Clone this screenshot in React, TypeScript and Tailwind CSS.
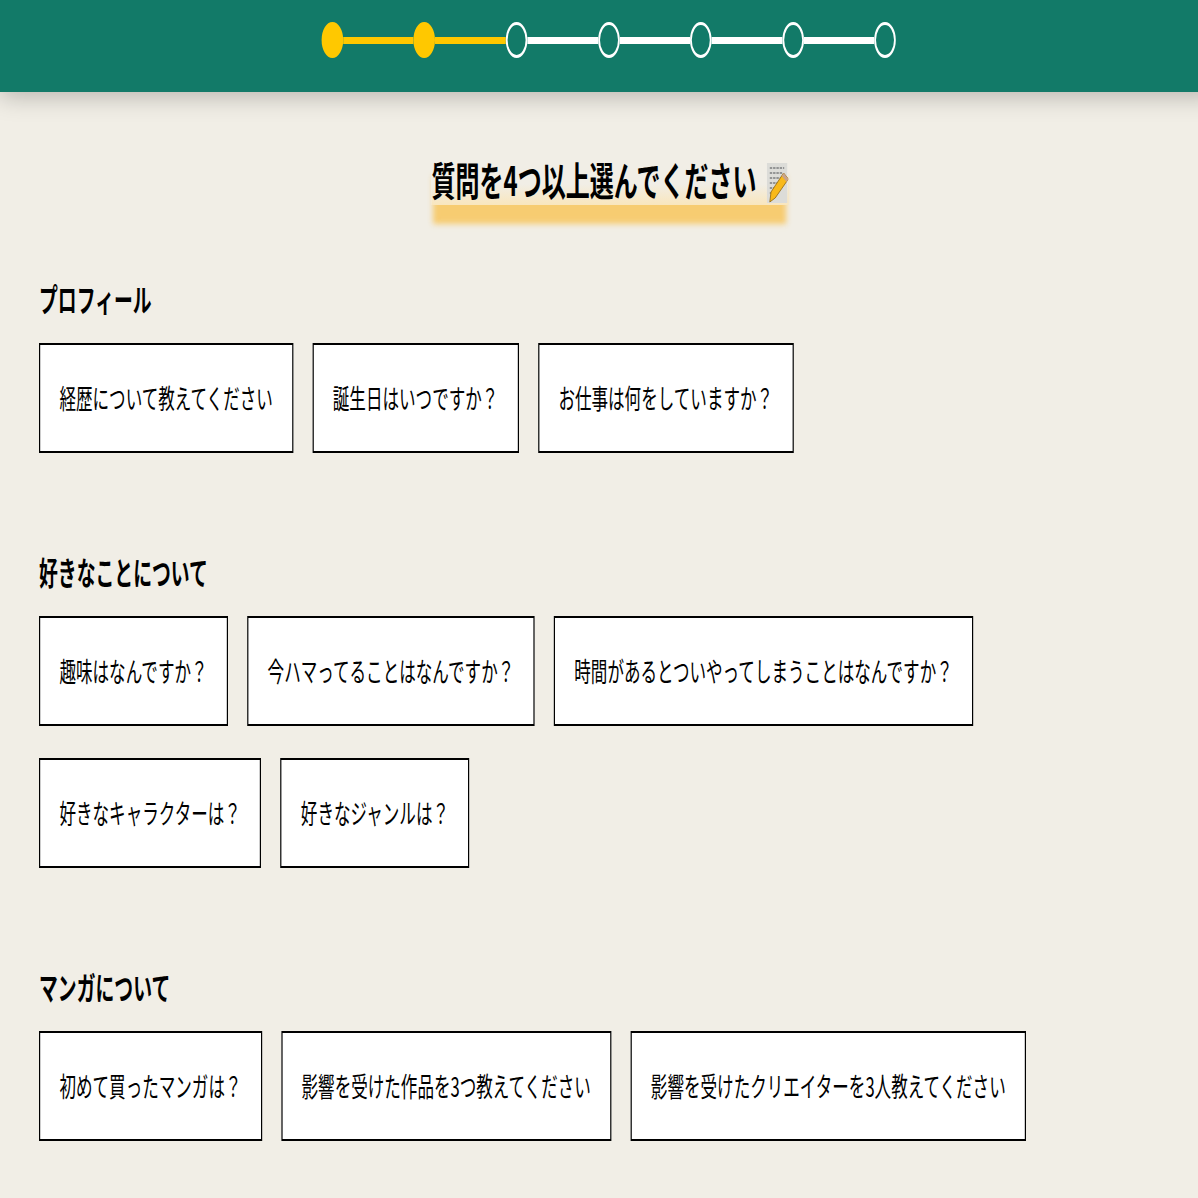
const sections = [
  {
    title: 'プロフィール',
    questions: ['経歴について教えてください', '誕生日はいつですか？', 'お仕事は何をしていますか？'],
  },
  {
    title: '好きなことについて',
    questions: [
      '趣味はなんですか？',
      '今ハマってることはなんですか？',
      '時間があるとついやってしまうことはなんですか？',
      '好きなキャラクターは？',
      '好きなジャンルは？',
    ],
  },
  {
    title: 'マンガについて',
    questions: ['初めて買ったマンガは？', '影響を受けた作品を3つ教えてください', '影響を受けたクリエイターを3人教えてください'],
  },
];

const steps = [true, true, false, false, false, false, false];

const MemoIcon = () => (
  <svg viewBox="0 0 36 40" className="ml-[17px] mt-[10px] h-[40px] w-[36px] shrink-0 self-start">
    <rect x="0" y="0" width="34" height="40" fill="#dcdcd8" />
    <g stroke="#4a4d50" strokeWidth="1.2" strokeDasharray="4 1.5">
      <path d="M5 5h24M5 10h22M5 15h18M5 20h15M5 25h12M5 30h8" />
    </g>
    <path d="M28 10l8 6-22 19-9 4 2-10z" fill="#f8b91a" stroke="#8f6510" strokeWidth="1" />
    <path d="M28 10l8 6-3 3-8-6z" fill="#c9a38a" />
  </svg>
);

const Stepper = () => (
  <div className="flex h-[80px] items-center justify-center pr-[1px]">
    {steps.map((done, i) => (
      <div key={i} className="flex items-center">
        {i > 0 && (
          <div className={`h-[7px] w-[117.6px] ${done || steps[i - 1] ? 'bg-[#ffc800]' : 'bg-white'}`} />
        )}
        <div
          className={`h-[36px] w-[36px] rounded-full border-[3px] ${
            done ? 'border-[#ffc800] bg-[#ffc800]' : 'border-white bg-transparent'
          }`}
        />
      </div>
    ))}
  </div>
);

const App = () => {
  return (
    <div className="h-[1198px] w-[1198px] overflow-hidden bg-[#f1eee6]">
      <div
        className="h-[1198px] w-[2030px] origin-top-left scale-x-[0.6] text-black"
        style={{ fontFamily: '"Noto Sans CJK JP", sans-serif' }}
      >
        <header className="h-[92px] bg-[#127a68] shadow-[0_4px_30px_rgba(0,0,0,0.25)]">
          <Stepper />
        </header>

        <div className="mt-[61px] flex justify-center pl-[3px]">
          <div className="flex h-[52px] bg-gradient-to-b from-transparent from-[60%] to-[#f9e6bd] shadow-[0_21px_7px_-2px_rgba(247,200,100,0.9)]">
            <h1 className="text-[40px] leading-[52px] font-bold whitespace-nowrap">質問を4つ以上選んでください</h1>
            <MemoIcon />
          </div>
        </div>

        <main className="mt-[73px] px-[65px]">
          {sections.map((section) => (
            <section key={section.title} className="mb-[98px]">
              <h2 className="text-[31.4px] leading-[42px] font-bold">{section.title}</h2>
              <div className="mt-[23px] flex flex-wrap gap-x-[32px] gap-y-[32px]">
                {section.questions.map((q) => (
                  <button
                    key={q}
                    className="flex h-[110px] items-center border-2 border-black bg-white px-[32px] text-[27.6px] whitespace-nowrap"
                  >
                    {q}
                  </button>
                ))}
              </div>
            </section>
          ))}
        </main>
      </div>
    </div>
  );
};

export default App;
